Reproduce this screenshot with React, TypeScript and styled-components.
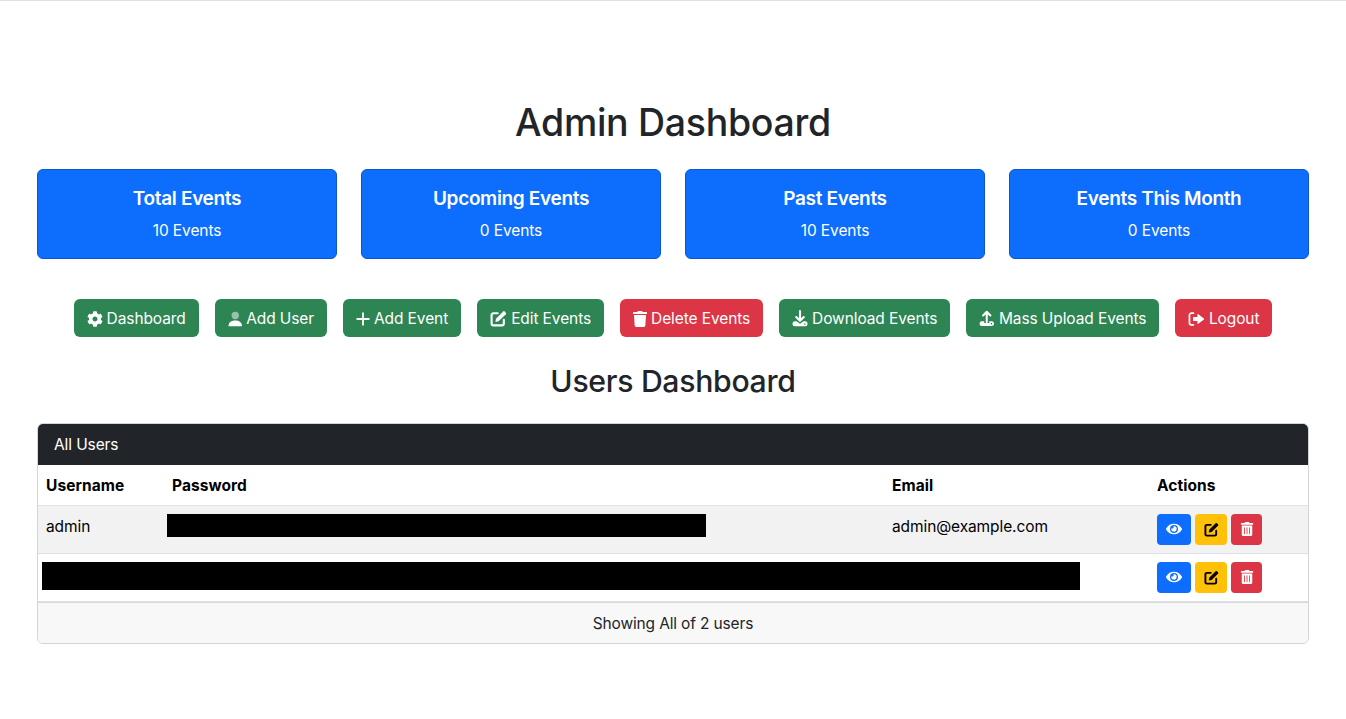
import React from "react";
import styled, { createGlobalStyle } from "styled-components";
import { FaCog, FaTrash, FaTrashAlt, FaEye } from "react-icons/fa";

const Global = createGlobalStyle`
  * { box-sizing: border-box; }
  html, body { margin: 0; padding: 0; background: #fff; }
  body { font-family: Inter, "Liberation Sans", sans-serif; font-size: 16px; line-height: 1.5; color: #212529; }
`;

const GREEN = "#2d8553";
const RED = "#dc3545";

const Page = styled.div`
  min-height: 719px;
  border-top: 1px solid #dee2e6;
  padding: 99px 37px 0;
`;
const Title = styled.h1`
  margin: 0 0 23px;
  text-align: center;
  font-size: 37.5px;
  font-weight: 500;
  line-height: 46px;
  letter-spacing: -0.3px;
`;
const Stats = styled.div`
  display: grid;
  grid-template-columns: repeat(4, 300px);
  justify-content: space-between;
`;
const Stat = styled.div`
  height: 90px;
  background: #0d6efd;
  border: 1px solid #0a58ca;
  border-radius: 6px;
  color: #fff;
  text-align: center;
  padding-top: 17px;
`;
const StatTitle = styled.div`
  font-size: 19px;
  font-weight: 600;
  line-height: 24px;
  margin-bottom: 8px;
  letter-spacing: -0.33px;
`;
const StatValue = styled.div`
  font-size: 15.5px;
  line-height: 24px;
  letter-spacing: -0.1px;
`;
const Actions = styled.div`
  display: flex;
  justify-content: center;
  gap: 16px;
  margin-top: 40px;
`;
const Btn = styled.div<{ $bg: string }>`
  height: 38px;
  display: inline-flex;
  align-items: center;
  gap: 4px;
  padding: 1px 13px 0;
  border-radius: 6px;
  background: ${(p) => p.$bg};
  color: #fff;
  font-size: 15.5px;
  letter-spacing: -0.1px;
  white-space: nowrap;
  svg { flex: none; }
`;
const Subtitle = styled.h2`
  margin: 24px 0 22px;
  text-align: center;
  font-size: 30.2px;
  font-weight: 500;
  line-height: 40px;
  letter-spacing: -0.3px;
`;
const Card = styled.div`
  border: 1px solid #d3d5d7;
  border-radius: 6px;
  overflow: hidden;
`;
const CardHeader = styled.div`
  height: 41px;
  background: #212529;
  color: #fff;
  padding: 0 16px;
  font-size: 15.5px;
  line-height: 41px;
  letter-spacing: -0.1px;
`;
const Table = styled.table`
  width: 100%;
  table-layout: fixed;
  border-collapse: collapse;
  color: #000;
`;
const Th = styled.th`
  height: 40px;
  padding: 3px 8px 0;
  text-align: left;
  font-size: 15.5px;
  line-height: 20px;
  font-weight: 700;
  letter-spacing: 0.06px;
  border-bottom: 1px solid #dee2e6;
`;
const Row = styled.tr<{ $striped?: boolean }>`
  background: ${(p) => (p.$striped ? "#f2f2f2" : "#fff")};
`;
const Td = styled.td<{ $pad?: string }>`
  height: 48px;
  padding: ${(p) => p.$pad ?? "0 8px 4px"};
  font-size: 15.5px;
  letter-spacing: -0.1px;
  vertical-align: middle;
  border-bottom: 1px solid #dee2e6;
`;
const Redaction = styled.div<{ $w: number; $h: number }>`
  width: ${(p) => p.$w}px;
  height: ${(p) => p.$h}px;
  background: #000;
`;
const IconGroup = styled.div`
  display: flex;
  gap: 4px;
`;
const IconBtn = styled.div<{ $bg: string; $w: number; $fg: string }>`
  width: ${(p) => p.$w}px;
  height: 31px;
  display: flex;
  align-items: center;
  justify-content: center;
  border-radius: 4px;
  background: ${(p) => p.$bg};
  color: ${(p) => p.$fg};
`;
const Footer = styled.div`
  height: 41px;
  background: #f8f8f8;
  border-top: 1px solid #d8d8d8;
  padding-top: 1px;
  text-align: center;
  font-size: 15.5px;
  line-height: 40px;
  letter-spacing: -0.15px;
`;
const TallTrash = styled(FaTrash)`
  width: 14px;
  height: 16px;
`;

const UserIcon = () => (
  <svg width="14.5" height="16" viewBox="0 0 15 16" fill="currentColor">
    <circle cx="7.5" cy="4.4" r="3.8" opacity="0.5" />
    <path d="M0.5 15.5c0-3.8 2.6-6 7-6s7 2.2 7 6z" />
  </svg>
);
const PlusIcon = () => (
  <svg width="14" height="16" viewBox="0 0 14 16" stroke="currentColor" strokeWidth="1.8" strokeLinecap="round" fill="none">
    <path d="M7 2.2v11.6M1.2 8h11.6" />
  </svg>
);
const EditIcon = ({ size = 17 }: { size?: number }) => (
  <svg width={size} height={size} viewBox="0 0 16 16" fill="currentColor">
    <path d="M13 9.2v3.6a1.7 1.7 0 0 1-1.7 1.7H3.2a1.7 1.7 0 0 1-1.7-1.7V4.7A1.7 1.7 0 0 1 3.2 3h4" fill="none" stroke="currentColor" strokeWidth="2" strokeLinecap="round" />
    <path d="M5.6 8.2 12.4 1.4a1 1 0 0 1 1.4 0l1.1 1.1a1 1 0 0 1 0 1.4L8.1 10.7l-3 .6z" />
  </svg>
);
const DownloadIcon = () => (
  <svg width="16" height="17" viewBox="0 0 16 16.5" fill="none">
    <path d="M8 .8v9.6M4.2 6.8 8 10.6l3.8-3.8" stroke="currentColor" strokeWidth="2.1" strokeLinecap="round" strokeLinejoin="round" />
    <path d="M.5 13.6A2.5 2.5 0 0 1 3 11.1h1.6L8 13.6l3.4-2.5H13a2.5 2.5 0 0 1 0 5H3a2.5 2.5 0 0 1-2.5-2.5z" fill="currentColor" />
    <circle cx="12.8" cy="13.7" r="0.8" fill={GREEN} />
  </svg>
);
const UploadIcon = () => (
  <svg width="15.5" height="17" viewBox="0 0 16 16.5" fill="none">
    <path d="M8 11.8V1.5M4.2 5.2 8 1.3l3.8 3.9" stroke="currentColor" strokeWidth="2.1" strokeLinecap="round" strokeLinejoin="round" />
    <path d="M.5 13.6A2.5 2.5 0 0 1 3 11.1h2.4V13h5.2v-1.9H13a2.5 2.5 0 0 1 0 5H3a2.5 2.5 0 0 1-2.5-2.5z" fill="currentColor" />
    <circle cx="12.8" cy="13.7" r="0.8" fill={GREEN} />
  </svg>
);
const LogoutIcon = () => (
  <svg width="16.5" height="16" viewBox="0 0 16 16" fill="none">
    <path d="M5.2 2.2H3.1A1.9 1.9 0 0 0 1.2 4.1v7.8a1.9 1.9 0 0 0 1.9 1.9h2.1" stroke="currentColor" strokeWidth="1.7" strokeLinecap="round" />
    <path d="M5.4 6h3.8V3.6a.5.5 0 0 1 .8-.4l5.7 4.4a.5.5 0 0 1 0 .8L10 12.8a.5.5 0 0 1-.8-.4V10H5.4a.6.6 0 0 1-.6-.6V6.6a.6.6 0 0 1 .6-.6z" fill="currentColor" />
  </svg>
);

const stats = [
  ["Total Events", "10 Events"],
  ["Upcoming Events", "0 Events"],
  ["Past Events", "10 Events"],
  ["Events This Month", "0 Events"],
];
const buttons: [React.ReactNode, string, string][] = [
  [<FaCog size={16} />, "Dashboard", GREEN],
  [<UserIcon />, "Add User", GREEN],
  [<PlusIcon />, "Add Event", GREEN],
  [<EditIcon />, "Edit Events", GREEN],
  [<TallTrash />, "Delete Events", RED],
  [<DownloadIcon />, "Download Events", GREEN],
  [<UploadIcon />, "Mass Upload Events", GREEN],
  [<LogoutIcon />, "Logout", RED],
];

const RowActions = () => (
  <IconGroup>
    <IconBtn $bg="#0d6efd" $fg="#fff" $w={34}><FaEye size={16} /></IconBtn>
    <IconBtn $bg="#ffc107" $fg="#000" $w={32}><EditIcon size={15} /></IconBtn>
    <IconBtn $bg={RED} $fg="#fff" $w={31}><FaTrashAlt size={14} /></IconBtn>
  </IconGroup>
);

export default function App() {
  return (
    <Page>
      <Global />
      <Title>Admin Dashboard</Title>
      <Stats>
        {stats.map(([t, v]) => (
          <Stat key={t}>
            <StatTitle>{t}</StatTitle>
            <StatValue>{v}</StatValue>
          </Stat>
        ))}
      </Stats>
      <Actions>
        {buttons.map(([icon, label, bg]) => (
          <Btn key={label} $bg={bg}>{icon}{label}</Btn>
        ))}
      </Actions>
      <Subtitle>Users Dashboard</Subtitle>
      <Card>
        <CardHeader>All Users</CardHeader>
        <Table>
          <colgroup>
            <col style={{ width: 126 }} />
            <col style={{ width: 720 }} />
            <col style={{ width: 265 }} />
            <col />
          </colgroup>
          <thead>
            <tr>
              <Th>Username</Th>
              <Th>Password</Th>
              <Th>Email</Th>
              <Th>Actions</Th>
            </tr>
          </thead>
          <tbody>
            <Row $striped>
              <Td>admin</Td>
              <Td $pad="0 3px 7px"><Redaction $w={539} $h={23} /></Td>
              <Td>admin@example.com</Td>
              <Td $pad="0 8px"><RowActions /></Td>
            </Row>
            <Row>
              <Td colSpan={3} $pad="0 4px 2px"><Redaction $w={1038} $h={28} /></Td>
              <Td $pad="0 8px"><RowActions /></Td>
            </Row>
          </tbody>
        </Table>
        <Footer>Showing All of 2 users</Footer>
      </Card>
    </Page>
  );
}
